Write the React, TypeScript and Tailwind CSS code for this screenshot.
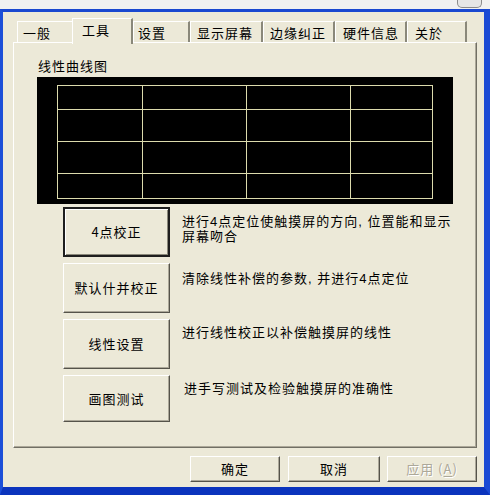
import React from "react";

const FONT = { fontFamily: '"Noto Sans CJK SC", "Noto Sans", sans-serif' };
const DESC_FONT = { fontFamily: '"Liberation Sans", "Noto Sans CJK SC", sans-serif' };

type Tab = { label: string; w: string; pl: string; active?: boolean; noRight?: boolean };

const tabs: Tab[] = [
  { label: "一般", w: "w-[55px]", pl: "pl-[5px]", noRight: true },
  { label: "工具", w: "w-[61px]", pl: "pl-[9px]", active: true },
  { label: "设置", w: "w-[57px]", pl: "pl-[4px]" },
  { label: "显示屏幕", w: "w-[73px]", pl: "pl-[6px]" },
  { label: "边缘纠正", w: "w-[72px]", pl: "pl-[6px]" },
  { label: "硬件信息", w: "w-[72px]", pl: "pl-[7px]" },
  { label: "关於", w: "w-[60px]", pl: "pl-[7px]" },
];

function TabItem({ t }: { t: Tab }) {
  if (t.active) {
    return (
      <div
        className={`${t.w} ${t.pl} relative z-10 -mb-[2px] h-[26px] flex items-center pb-[4px] bg-[#ece9d8] border-t border-l border-white border-r-2 border-r-[#8a887a] shrink-0`}
      >
        {t.label}
      </div>
    );
  }
  return (
    <div
      className={`${t.w} ${t.pl} h-[21px] flex items-center pt-[2px] border-t border-l border-white ${
        t.noRight ? "" : "border-r-2 border-r-[#8a887a]"
      } shrink-0`}
    >
      {t.label}
    </div>
  );
}

// Linear curve grid: black plot area with pale yellow grid lines
function CurveGrid() {
  const xs = [20, 105, 209, 313, 395];
  const ys = [8, 32, 64, 96, 121];
  return (
    <div className="ml-[23px] mt-[3px] w-[416px] h-[127px] bg-black shrink-0">
      <svg width="416" height="127" viewBox="0 0 416 127" shapeRendering="crispEdges">
        {xs.map((x) => (
          <line key={`v${x}`} x1={x + 0.5} y1={8} x2={x + 0.5} y2={122} stroke="#dcdbad" strokeWidth={1} />
        ))}
        {ys.map((y) => (
          <line key={`h${y}`} x1={20} y1={y + 0.5} x2={396} y2={y + 0.5} stroke="#dcdbad" strokeWidth={1} />
        ))}
      </svg>
    </div>
  );
}

const btnBase =
  "flex items-center justify-center bg-[#ece9d8] tracking-[1px] shrink-0";
const btnRaised =
  "border border-t-white border-l-white border-r-[#55534a] border-b-[#55534a] shadow-[inset_-1px_-1px_0_#aca899]";
const btnDefault =
  "border-2 border-[#1e1e1e] shadow-[inset_1px_1px_0_#ffffff,inset_-1px_-1px_0_#8a887a]";

type Row = { btn: string; desc: React.ReactNode; h: string; pt: string; ml: string; def?: boolean };

const rows: Row[] = [
  {
    btn: "4点校正",
    desc: (
      <>
        进行4点定位使触摸屏的方向, 位置能和显示
        <br />
        屏幕吻合
      </>
    ),
    h: "h-[50px]",
    pt: "pt-[7px]",
    ml: "ml-[12px]",
    def: true,
  },
  { btn: "默认什并校正", desc: "清除线性补偿的参数, 并进行4点定位", h: "h-[50px]", pt: "pt-[8px]", ml: "ml-[12px]" },
  { btn: "线性设置", desc: "进行线性校正以补偿触摸屏的线性", h: "h-[50px]", pt: "pt-[6px]", ml: "ml-[12px]" },
  { btn: "画图测试", desc: "进手写测试及检验触摸屏的准确性", h: "h-[47px]", pt: "pt-[6px]", ml: "ml-[14px]" },
];

export default function App() {
  return (
    <div
      className="w-[490px] h-[495px] flex flex-col bg-[#f1f1f1] text-[13px] text-black overflow-hidden"
      style={FONT}
    >
      {/* strip of the caption bar above the frame */}
      <div className="h-[9px] flex justify-end pr-[8px] shrink-0">
        <div className="w-[25px] h-[8px] rounded-b-[5px] border-x border-b border-[#8c8c8c] bg-[#e6e6e6]" />
      </div>

      {/* window body */}
      <div className="flex-1 flex flex-col bg-[#ece9d8] border-l-[3px] border-t-[3px] border-r-[6px] border-b-[8px] border-l-[#1c4fd8] border-t-[#1a48d0] border-r-[#1a4ad4] border-b-[#0b34bd] pl-[10px] pr-[7px] pt-[6px] pb-[5px]">
        {/* tab strip */}
        <div className="h-[24px] flex items-end pl-[4px] tracking-[1px] shrink-0">
          {tabs.map((t) => (
            <TabItem key={t.label} t={t} />
          ))}
        </div>

        {/* tab page */}
        <div className="h-[406px] flex flex-col border-t border-l border-white border-r border-b border-r-[#716f64] border-b-[#716f64] shadow-[inset_-1px_-1px_0_#aca899] shrink-0">
          <div className="ml-[24px] mt-[14px] h-[17px] leading-[17px] tracking-[1px]">线性曲线图</div>
          <CurveGrid />

          <div className="ml-[49px] mt-[3px] flex flex-col gap-[6px]">
            {rows.map((r) => (
              <div key={r.btn} className="flex">
                <div className={`${btnBase} ${r.def ? btnDefault : btnRaised} w-[107px] ${r.h}`}>{r.btn}</div>
                <div
                  className={`${r.ml} ${r.pt} leading-[15px] tracking-[1px] whitespace-nowrap`}
                  style={DESC_FONT}
                >
                  {r.desc}
                </div>
              </div>
            ))}
          </div>
        </div>

        {/* dialog buttons */}
        <div className="mt-[8px] h-[26px] flex justify-end shrink-0">
          <div className={`${btnBase} ${btnRaised} w-[90px] h-[26px]`}>确定</div>
          <div className={`${btnBase} ${btnRaised} ml-[8px] w-[92px] h-[26px]`}>取消</div>
          <div
            className={`${btnBase} ${btnRaised} ml-[7px] w-[90px] h-[26px] text-[#aca899] [text-shadow:1px_1px_0_#ffffff]`}
          >
            应用 (<span className="underline underline-offset-2">A</span>)
          </div>
        </div>
      </div>
    </div>
  );
}
